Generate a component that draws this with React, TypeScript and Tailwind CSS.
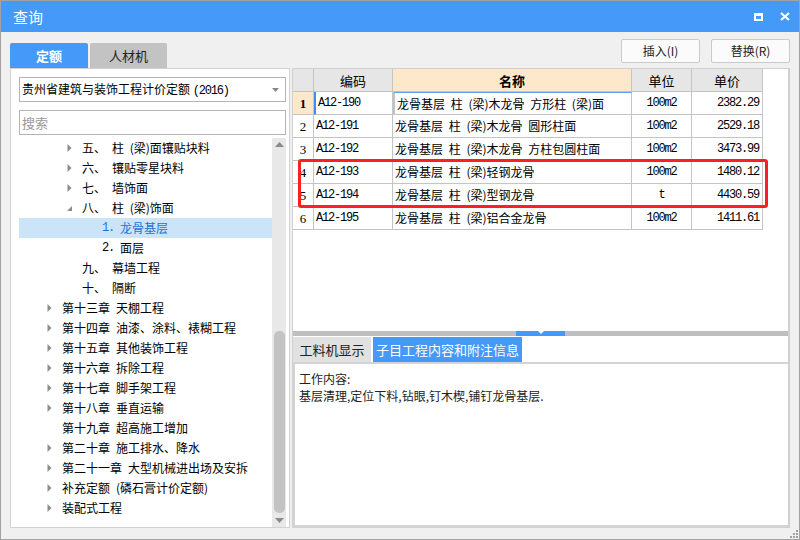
import React from "react";

type TreeItem = {
  label: string;
  level: number;
  arrow?: "closed" | "open";
  selected?: boolean;
};

const tree: TreeItem[] = [
  { label: "五、 柱 (梁)面镶贴块料", level: 1, arrow: "closed" },
  { label: "六、 镶贴零星块料", level: 1, arrow: "closed" },
  { label: "七、 墙饰面", level: 1, arrow: "closed" },
  { label: "八、 柱 (梁)饰面", level: 1, arrow: "open" },
  { label: "1. 龙骨基层", level: 2, selected: true },
  { label: "2. 面层", level: 2 },
  { label: "九、 幕墙工程", level: 1 },
  { label: "十、 隔断", level: 1 },
  { label: "第十三章 天棚工程", level: 0, arrow: "closed" },
  { label: "第十四章 油漆、涂料、裱糊工程", level: 0, arrow: "closed" },
  { label: "第十五章 其他装饰工程", level: 0, arrow: "closed" },
  { label: "第十六章 拆除工程", level: 0, arrow: "closed" },
  { label: "第十七章 脚手架工程", level: 0, arrow: "closed" },
  { label: "第十八章 垂直运输", level: 0, arrow: "closed" },
  { label: "第十九章 超高施工增加", level: 0 },
  { label: "第二十章 施工排水、降水", level: 0, arrow: "closed" },
  { label: "第二十一章 大型机械进出场及安拆", level: 0, arrow: "closed" },
  { label: "补充定额 (磷石膏计价定额)", level: 0, arrow: "closed" },
  { label: "装配式工程", level: 0, arrow: "closed" },
];

const rows = [
  { code: "A12-190", name: "龙骨基层 柱 (梁)木龙骨 方形柱 (梁)面", unit: "100m2", price: "2382.29" },
  { code: "A12-191", name: "龙骨基层 柱 (梁)木龙骨 圆形柱面", unit: "100m2", price: "2529.18" },
  { code: "A12-192", name: "龙骨基层 柱 (梁)木龙骨 方柱包圆柱面", unit: "100m2", price: "3473.99" },
  { code: "A12-193", name: "龙骨基层 柱 (梁)轻钢龙骨", unit: "100m2", price: "1480.12" },
  { code: "A12-194", name: "龙骨基层 柱 (梁)型钢龙骨", unit: "t", price: "4430.59" },
  { code: "A12-195", name: "龙骨基层 柱 (梁)铝合金龙骨", unit: "100m2", price: "1411.61" },
];

const mono = "font-['Liberation_Mono',monospace] text-[12px] tracking-[-1.2px]";

const Arrow = ({ kind }: { kind?: "closed" | "open" }) => {
  if (!kind) return <span className="w-[5px]" />;
  return kind === "closed" ? (
    <svg width="5" height="8" viewBox="0 0 5 8">
      <path d="M0.5 0 L4.5 4 L0.5 8 Z" fill="#8c8c8c" />
    </svg>
  ) : (
    <svg width="5" height="8" viewBox="0 0 5 8">
      <path d="M5 2 L5 7 L0 7 Z" fill="#8c8c8c" />
    </svg>
  );
};

const TreeRow = ({ item }: { item: TreeItem }) => {
  const pad = item.level === 0 ? "pl-[28px]" : item.level === 1 ? "pl-[48px]" : "pl-[83px]";
  const [head, ...rest] = item.label.split(" ");
  return (
    <div
      className={`h-[20px] flex items-center ${pad} ${
        item.selected ? "bg-[#cce4f7] text-[#1a73d9]" : "text-black"
      }`}
    >
      {item.level < 2 && (
        <span className="w-[15px] flex items-center">
          <Arrow kind={item.arrow} />
        </span>
      )}
      {item.level === 2 ? (
        <>
          <span className={`${mono} w-[18px]`}>{head}</span>
          <span>{rest.join(" ")}</span>
        </>
      ) : rest.length ? (
        <>
          <span className={item.level === 1 ? "w-[30px]" : "mr-[6px]"}>{head}</span>
          <span className="[word-spacing:3px]">{rest.join(" ")}</span>
        </>
      ) : (
        <span>{head}</span>
      )}
    </div>
  );
};

export default function App() {
  return (
    <div className="w-[800px] h-[540px] bg-[#f0f0f0] border border-[#a3a3a3] flex flex-col overflow-hidden relative font-['Noto_Sans_CJK_SC',sans-serif] text-[12px] leading-none text-black">
      {/* title bar */}
      <div className="h-[31px] bg-[#4499f9] flex items-center justify-between pl-[12px] pr-[9px] shrink-0">
        <span className="text-white text-[15px]">查询</span>
        <div className="flex items-center gap-[17px]">
          <div className="w-[9px] h-[8px] border-2 border-t-[3px] border-white" />
          <svg width="10" height="9" viewBox="0 0 10 9">
            <path d="M1 1 L9 8 M9 1 L1 8" stroke="#fff" strokeWidth="2.2" />
          </svg>
        </div>
      </div>

      {/* tabs + buttons */}
      <div className="h-[36px] flex justify-between pl-[9px] pr-[9px] shrink-0">
        <div className="flex items-end gap-[2px]">
          <div className="w-[78px] h-[25px] bg-[#4499f9] rounded-t-[2px] text-white font-bold text-[13px] flex items-center justify-center">
            定额
          </div>
          <div className="w-[77px] h-[25px] bg-[#c3c3c3] rounded-t-[2px] text-[#222] text-[13px] flex items-center justify-center">
            人材机
          </div>
        </div>
        <div className="flex gap-[11px] pt-[7px]">
          <button className="w-[79px] h-[24px] bg-[#fbfbfb] border border-[#cacaca] rounded-[2px] text-[12px] text-[#222]">
            插入(I)
          </button>
          <button className="w-[79px] h-[24px] bg-[#fbfbfb] border border-[#cacaca] rounded-[2px] text-[12px] text-[#222]">
            替换(R)
          </button>
        </div>
      </div>

      {/* main */}
      <div className="h-[460px] flex gap-[2px] pl-[9px] shrink-0">
        {/* left */}
        <div className="w-[280px] bg-white border border-[#d2d2d2] flex flex-col pt-[8px] pl-[8px] pr-[3px]">
          <div className="w-[267px] h-[25px] border border-[#b4b4b4] flex items-center justify-between pl-[2px] pr-[6px] shrink-0">
            <span className="text-[12px]">
              贵州省建筑与装饰工程计价定额 <span className={mono}>(2016)</span>
            </span>
            <svg width="7" height="4" viewBox="0 0 7 4">
              <path d="M0 0 L7 0 L3.5 4 Z" fill="#888" />
            </svg>
          </div>
          <div className="w-[267px] h-[25px] mt-[8px] border border-[#b4b4b4] flex items-center pl-[2px] text-[#9a9a9a] text-[13px] shrink-0">
            搜索
          </div>
          <div className="flex mt-[3px] flex-1 min-h-0">
            <div className="w-[253px] flex flex-col">
              {tree.map((t, i) => (
                <TreeRow key={i} item={t} />
              ))}
            </div>
            <div className="w-[14px] bg-[#e8e8e8] flex flex-col items-center pt-[4px] pb-[4px]">
              <svg width="9" height="5" viewBox="0 0 9 5">
                <path d="M0 5 L9 5 L4.5 0 Z" fill="#8a8a8a" />
              </svg>
              <div className="flex-1" />
              <div className="w-[11px] h-[182px] bg-[#c3c3c3] rounded-[5px]" />
              <div className="h-[5px]" />
              <svg width="9" height="5" viewBox="0 0 9 5">
                <path d="M0 0 L9 0 L4.5 5 Z" fill="#8a8a8a" />
              </svg>
            </div>
          </div>
        </div>

        {/* right */}
        <div className="w-[498px] bg-white border border-[#d0d0d0] border-r-[2px] flex flex-col relative">
          <div className="h-[262px] shrink-0">
            <div className="grid grid-cols-[21px_79px_239px_60px_71px] w-[470px]">
              <div className="h-[23px] bg-[#e6e6e6] border-r border-b border-[#c4c4c4]" />
              <div className="h-[23px] bg-[#e6e6e6] border-r border-b border-[#c4c4c4] flex items-center justify-center text-[13px]">
                编码
              </div>
              <div className="h-[23px] bg-[#fde8cc] border-r border-b border-[#c4c4c4] flex items-center justify-center text-[13px] font-bold">
                名称
              </div>
              <div className="h-[23px] bg-[#e6e6e6] border-r border-b border-[#c4c4c4] flex items-center justify-center text-[13px]">
                单位
              </div>
              <div className="h-[23px] bg-[#e6e6e6] border-r border-b border-[#c4c4c4] flex items-center justify-center text-[13px]">
                单价
              </div>
              {rows.map((r, i) => {
                const first = i === 0;
                return (
                  <React.Fragment key={r.code}>
                    <div
                      className={`h-[23px] border-r border-b border-[#c4c4c4] flex items-center justify-center font-['Liberation_Serif',serif] text-[13px] ${
                        first ? "bg-[#fde8cc] font-bold" : ""
                      }`}
                    >
                      {i + 1}
                    </div>
                    <div
                      className={`h-[23px] border-r border-b border-[#c4c4c4] flex items-center pl-[2px] ${mono} ${
                        first ? "border-l-[2px] border-l-[#3d8ef0]" : ""
                      }`}
                    >
                      {r.code}
                    </div>
                    <div
                      className={`h-[23px] border-r border-b border-[#c4c4c4] flex items-center pl-[2px] text-[12px] [word-spacing:3px] ${
                        first ? "border-[2px] border-[#707070] border-t-[1px] border-t-[#5aa0f0]" : ""
                      }`}
                    >
                      {r.name}
                    </div>
                    <div className={`h-[23px] border-r border-b border-[#c4c4c4] flex items-center justify-center ${mono}`}>
                      {r.unit}
                    </div>
                    <div className={`h-[23px] border-r border-b border-[#c4c4c4] flex items-center justify-end pr-[3px] ${mono}`}>
                      {r.price}
                    </div>
                  </React.Fragment>
                );
              })}
            </div>
          </div>

          {/* splitter */}
          <div className="h-[5px] bg-[#bfbfbf] flex justify-center shrink-0">
            <div className="w-[49px] h-[5px] bg-[#4499f9] flex justify-center items-start">
              <svg width="6" height="3" viewBox="0 0 6 3">
                <path d="M0 0 L6 0 L3 3 Z" fill="#fff" />
              </svg>
            </div>
          </div>

          {/* lower tabs */}
          <div className="flex gap-[2px] mt-[1px] h-[25px] shrink-0">
            <div className="w-[78px] bg-[#e1e1e1] flex items-center justify-center text-[13px] text-[#222]">
              工料机显示
            </div>
            <div className="w-[149px] bg-[#4499f9] flex items-center justify-center text-[13px] text-white">
              子目工程内容和附注信息
            </div>
          </div>
          <div className="flex-1 border-2 border-[#d4d4d4] border-r-0 bg-white pl-[4px] pt-[6px] text-[12px] leading-[17px] text-[#222]">
            <div>工作内容:</div>
            <div>基层清理,定位下料,钻眼,钉木楔,铺钉龙骨基层.</div>
          </div>

          {/* highlight */}
          <div className="absolute left-[5px] top-[90px] w-[470px] h-[49px] border-[3px] border-[#ff1f1f] rounded-[3px] pointer-events-none" />
        </div>
      </div>

      {/* resize grip */}
      <svg className="absolute right-[1px] bottom-[1px]" width="8" height="8" viewBox="0 0 8 8">
        <rect x="6" y="0" width="2" height="2" fill="#a0a0a0" />
        <rect x="3" y="3" width="2" height="2" fill="#a0a0a0" />
        <rect x="6" y="3" width="2" height="2" fill="#a0a0a0" />
        <rect x="0" y="6" width="2" height="2" fill="#a0a0a0" />
        <rect x="3" y="6" width="2" height="2" fill="#a0a0a0" />
        <rect x="6" y="6" width="2" height="2" fill="#a0a0a0" />
      </svg>
    </div>
  );
}
